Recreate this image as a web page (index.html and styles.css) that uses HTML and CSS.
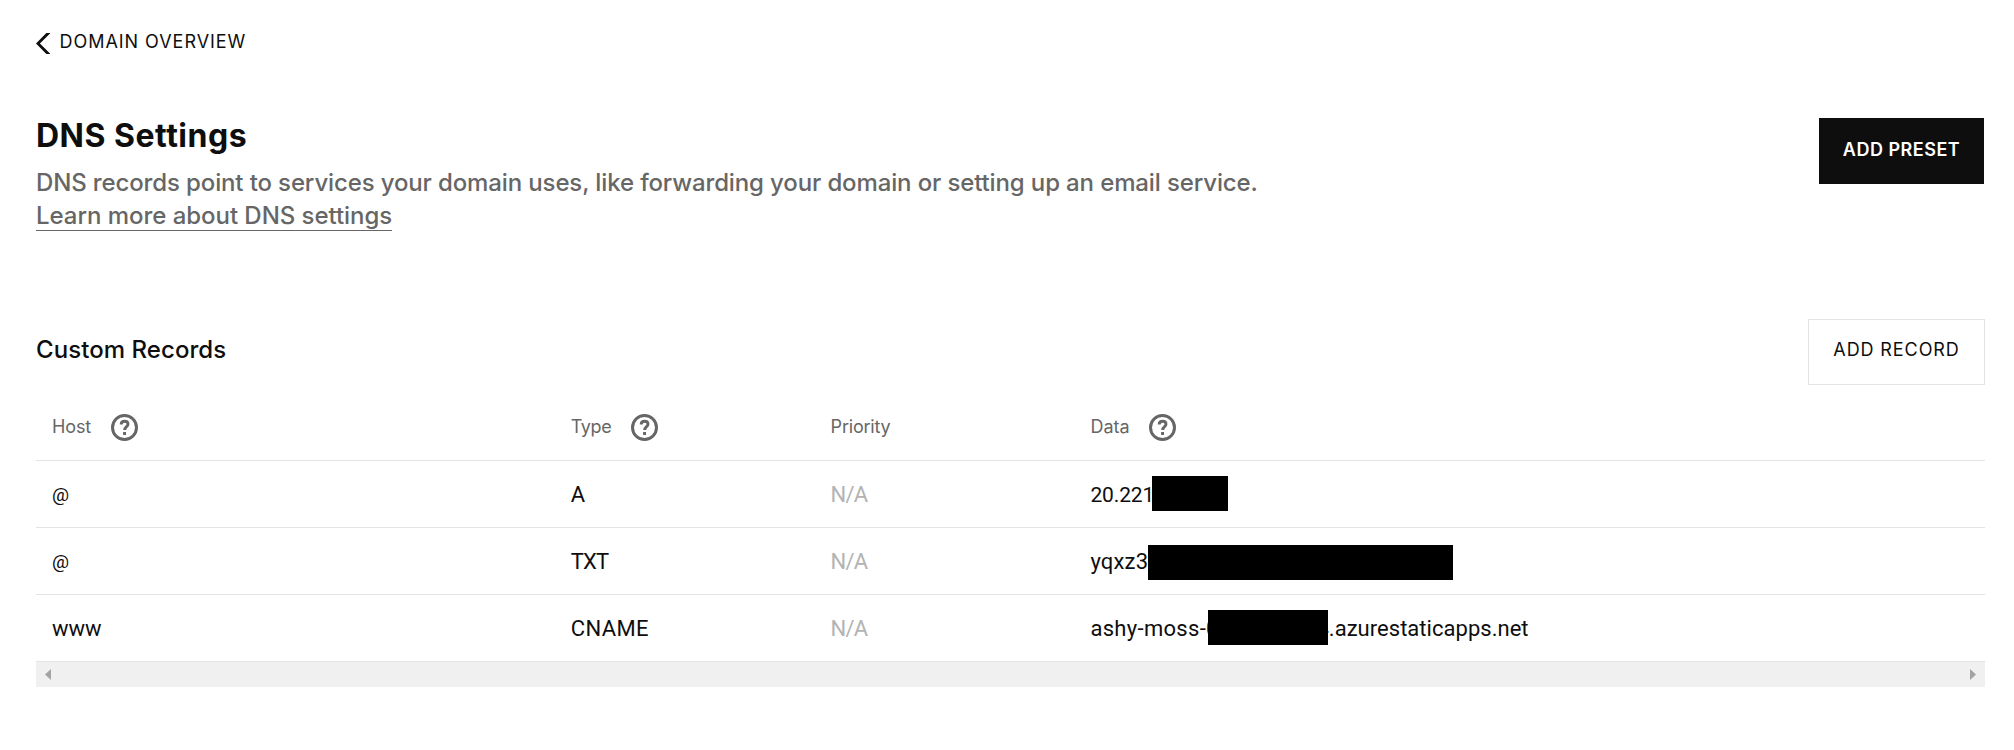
FILE: index.html
```html
<!DOCTYPE html>
<html lang="en">
<head>
<meta charset="utf-8">
<title>DNS Settings</title>
<link rel="stylesheet" href="styles.css">
</head>
<body>
<svg class="sprite" aria-hidden="true">
  <symbol id="help" viewBox="0 0 27 27">
    <circle cx="13.5" cy="13.5" r="12" fill="none" stroke="currentColor" stroke-width="3"/>
    <path d="M10.2 10.4C10.2 8.3 11.6 7.3 13.6 7.3C15.7 7.3 17 8.5 17 10.2C17 12.6 13.7 12.7 13.7 15.9" fill="none" stroke="currentColor" stroke-width="2.9"/>
    <path d="M12.1 18H15V21H12.1Z" fill="currentColor"/>
  </symbol>
</svg>
<main class="page">
  <a class="back">
    <svg class="chevron" width="14" height="21" viewBox="0 0 14 21"><path d="M10.4 0H14.4L3.9 10.5L14.4 21H10.4L0 10.5Z" fill="#0e0e0e"/></svg>
    <span>DOMAIN OVERVIEW</span>
  </a>
  <header class="intro">
    <div>
      <h1 class="title">DNS Settings</h1>
      <p class="lead">DNS records point to services your domain uses, like forwarding your domain or setting up an email service.</p>
      <a class="learn">Learn more about DNS settings</a>
    </div>
    <button class="btn btn-primary">ADD PRESET</button>
  </header>
  <section>
    <div class="records-head">
      <h2 class="subtitle">Custom Records</h2>
      <button class="btn btn-outline">ADD RECORD</button>
    </div>
    <div class="table">
      <div class="row head">
        <div class="cell"><span class="host">Host</span><svg class="help"><use href="#help"/></svg></div>
        <div class="cell"><span class="type">Type</span><svg class="help"><use href="#help"/></svg></div>
        <div class="cell"><span class="priority">Priority</span></div>
        <div class="cell"><span>Data</span><svg class="help"><use href="#help"/></svg></div>
      </div>
      <div class="row">
        <div class="cell at">@</div><div class="cell">A</div><div class="cell muted">N/A</div>
        <div class="cell data"><span class="digits">20.221</span><span class="redacted redacted-ip"></span></div>
      </div>
      <div class="row">
        <div class="cell at">@</div><div class="cell txt">TXT</div><div class="cell muted">N/A</div>
        <div class="cell data"><span class="token">yqxz3</span><span class="redacted redacted-token"></span></div>
      </div>
      <div class="row">
        <div class="cell">www</div><div class="cell cname">CNAME</div><div class="cell muted">N/A</div>
        <div class="cell data"><span class="prefix">ashy-moss-0</span><span class="suffix">4.azurestaticapps.net</span><span class="redacted redacted-host"></span></div>
      </div>
    </div>
    <div class="scrollbar">
      <svg width="6" height="11" viewBox="0 0 6 11"><path d="M6 0V11L0 5.5Z" fill="#a3a3a3"/></svg>
      <svg width="6" height="11" viewBox="0 0 6 11"><path d="M0 0V11L6 5.5Z" fill="#a3a3a3"/></svg>
    </div>
  </section>
</main>
</body>
</html>
```

FILE: styles.css
```css
* { box-sizing: border-box; }
body { margin: 0; background: #fff; color: #0e0e0e; font-family: Inter, sans-serif; }
.sprite { display: none; }
.page { padding: 30px 29px 0 36px; }
.back { display: flex; gap: 9.5px; height: 24px; font-size: 18px; line-height: 24px; letter-spacing: 0.96px; }
.chevron { margin-top: 3px; flex: none; }
.intro { display: flex; justify-content: space-between; align-items: flex-start; margin-top: 64px; height: 201px; }
.title { margin: -2px 0 0; font-size: 32px; line-height: 40px; font-weight: 700; letter-spacing: 0.5px; }
.lead { margin: 10px 0 0; font-size: 24px; line-height: 33px; font-weight: 500; letter-spacing: -0.13px; color: #666; white-space: nowrap; }
.learn { display: inline-block; height: 32px; border-bottom: 1px solid #666; font-size: 24px; line-height: 33px; font-weight: 500; letter-spacing: -0.04px; color: #666; }
.btn { display: flex; justify-content: center; height: 66px; padding: 0; border: 0; font: 18px/24px Inter, sans-serif; }
.btn-primary { width: 165px; padding-top: 20px; margin-right: 1px; background: #0e0e0e; color: #fff; font-weight: 600; letter-spacing: 0.5px; }
.btn-outline { width: 177px; padding-top: 18px; border: 1px solid #e3e3e3; background: #fff; color: #0e0e0e; letter-spacing: 0.9px; }
.records-head { display: flex; justify-content: space-between; height: 75px; }
.subtitle { margin: 14px 0 0; font-size: 24px; line-height: 33px; font-weight: 500; letter-spacing: 0.06px; }
.row { display: grid; grid-template-columns: 4fr 2fr 2fr 7fr; height: 67px; border-bottom: 1px solid #e3e3e3; font: 22px/68px Roboto, sans-serif; }
.cell { padding-left: 15px; white-space: nowrap; min-width: 0; }
.cell:first-child { padding-left: 16px; }
.head { font: 18px/66px Inter, sans-serif; color: #666; }
.head .cell { display: flex; align-items: center; gap: 19.5px; }
.host { letter-spacing: -0.1px; }
.type { letter-spacing: -0.4px; }
.priority { letter-spacing: -0.2px; }
.help { width: 27px; height: 27px; }
.at { font-size: 19px; }
.txt { letter-spacing: -0.8px; }
.cname { letter-spacing: 0.4px; }
.muted { color: #b3b3b3; letter-spacing: -0.8px; }
.data { display: flex; position: relative; }
.digits { font-size: 21px; letter-spacing: -0.15px; }
.token { letter-spacing: 0.15px; }
.prefix { width: 226px; letter-spacing: 0.3px; }
.suffix { letter-spacing: 0.03px; }
.redacted { position: absolute; height: 35px; background: #000; }
.redacted-ip { left: 77px; top: 15px; width: 76px; }
.redacted-token { left: 73px; top: 17px; width: 305px; }
.redacted-host { left: 133px; top: 15px; width: 120px; }
.scrollbar { display: flex; align-items: center; justify-content: space-between; height: 25px; padding: 0 9px; background: #f0f0f0; }
```
